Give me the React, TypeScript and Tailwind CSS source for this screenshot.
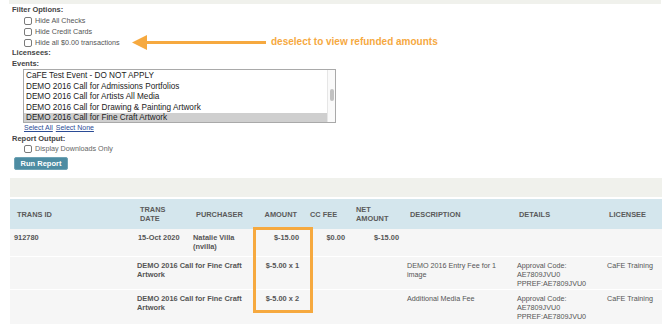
const events = [
  "CaFE Test Event - DO NOT APPLY",
  "DEMO 2016 Call for Admissions Portfolios",
  "DEMO 2016 Call for Artists All Media",
  "DEMO 2016 Call for Drawing & Painting Artwork",
  "DEMO 2016 Call for Fine Craft Artwork",
];

function Check({ label }: { label: string }) {
  return (
    <div className="flex h-[11px] items-center gap-[3px] pl-[12px] text-[7.2px] leading-[11px] text-[#555]">
      <span className="h-[8px] w-[8px] rounded-[2px] border border-[#7a7a7a] bg-white" />
      {label}
    </div>
  );
}

const th = "pl-[6px] text-left align-middle font-bold text-[#5a5a5a]";
const td = "px-[4px] pt-[4px] align-top";

export default function App() {
  return (
    <div className="relative h-[335px] w-[670px] overflow-hidden bg-white font-['Liberation_Sans',Arial,sans-serif] text-[#444]">
      <div className="mx-[9px] h-[4px] bg-[#f0f1ec]" />

      <div className="pl-[12px] pt-[1px]">
        <div className="h-[10px] text-[7.5px] font-bold leading-[10px]">Filter Options:</div>
        <Check label="Hide All Checks" />
        <Check label="Hide Credit Cards" />
        <Check label="Hide all $0.00 transactions" />
        <div className="h-[10px] text-[7.5px] font-bold leading-[10px]">Licensees:</div>
        <div className="h-[11px] text-[7.5px] font-bold leading-[11px]">Events:</div>

        <div className="ml-[11px] flex h-[54px] w-[313px] overflow-hidden border border-[#a9a9a9] bg-white">
          <div className="flex-1 overflow-hidden pt-[1px]">
            {events.map((e, i) => (
              <div
                key={e}
                className={
                  "h-[10.6px] whitespace-nowrap pl-[2px] text-[8.2px] leading-[10.6px] text-[#222] " +
                  (i === events.length - 1 ? "bg-[#cfcfcf]" : "")
                }
              >
                {e}
              </div>
            ))}
          </div>
          <div className="w-[8px] border-l border-[#e6e6e6] bg-[#fafafa] pt-[19px]">
            <div className="mx-auto h-[12px] w-[4px] rounded-full bg-[#c2c2c2]" />
          </div>
        </div>

        <div className="flex h-[10px] gap-[3px] pl-[12px] text-[7px] leading-[10px] text-[#2b4c96] underline">
          <span>Select All</span>
          <span>Select None</span>
        </div>
        <div className="mt-[1px] h-[10px] text-[7.5px] font-bold leading-[10px]">Report Output:</div>
        <div className="flex h-[10px] items-center gap-[3px] pl-[12px] text-[7.2px] leading-[10px] text-[#666]">
          <span className="h-[8px] w-[8px] rounded-[2px] border border-[#7a7a7a] bg-white" />
          Display Downloads Only
        </div>
        <button className="ml-[2px] mt-[3px] flex h-[13px] w-[54px] items-center justify-center rounded-[2px] border border-[#6fa3b5] bg-[#4d8ca2] text-[7.5px] font-bold text-white">
          Run Report
        </button>
      </div>

      <div className="mx-[10px] mt-[8px] h-[19px] w-[652px] bg-[#f0f1ec]" />

      <div className="relative ml-[10px] mt-[2px] w-[652px]">
        <table className="w-[652px] table-fixed border-collapse text-[7.4px] leading-[9px]">
          <colgroup>
            <col className="w-[124px]" />
            <col className="w-[56px]" />
            <col className="w-[66px]" />
            <col className="w-[47px]" />
            <col className="w-[46px]" />
            <col className="w-[54px]" />
            <col className="w-[110px]" />
            <col className="w-[90px]" />
            <col className="w-[59px]" />
          </colgroup>
          <thead>
            <tr className="h-[30px] bg-[#d4e6ed]">
              <th className={th + " pl-[7px]"}>TRANS ID</th>
              <th className={th}>
                TRANS
                <br />
                DATE
              </th>
              <th className={th + " pl-[5px]"}>PURCHASER</th>
              <th className="pr-[6px] text-right align-middle font-bold text-[#5a5a5a]">AMOUNT</th>
              <th className={th + " pl-[7px]"}>CC FEE</th>
              <th className={th + " pl-[7px]"}>
                NET
                <br />
                AMOUNT
              </th>
              <th className={th + " pl-[7px]"}>DESCRIPTION</th>
              <th className={th}>DETAILS</th>
              <th className={th}>LICENSEE</th>
            </tr>
          </thead>
          <tbody className="text-[#555]">
            <tr className="h-[27px] border-b border-white bg-[#f6f6f6] font-bold">
              <td className={td}>912780</td>
              <td className={td}>15-Oct 2020</td>
              <td className={td + " pl-[3px]"}>Natalie Villa (nvilla)</td>
              <td className={td + " text-right"}>$-15.00</td>
              <td className={td + " text-right"}>$0.00</td>
              <td className={td + " text-right"}>$-15.00</td>
              <td className={td} />
              <td className={td} />
              <td className={td} />
            </tr>
            <tr className="h-[33px] border-b border-white bg-[#f6f6f6]">
              <td className={td} />
              <td className={td + " pl-[3px] font-bold"} colSpan={2}>
                DEMO 2016 Call for Fine Craft Artwork
              </td>
              <td className={td + " text-right font-bold"}>$-5.00 x 1</td>
              <td className={td} />
              <td className={td} />
              <td className={td + " text-[7.2px]"}>DEMO 2016 Entry Fee for 1 image</td>
              <td className={td + " text-[7.2px]"}>
                Approval Code: AE7809JVU0
                <br />
                PPREF:AE7809JVU0
              </td>
              <td className={td + " text-[7.2px]"}>CaFE Training</td>
            </tr>
            <tr className="h-[35px] border-b border-white bg-[#f6f6f6]">
              <td className={td} />
              <td className={td + " pl-[3px] font-bold"} colSpan={2}>
                DEMO 2016 Call for Fine Craft Artwork
              </td>
              <td className={td + " text-right font-bold"}>$-5.00 x 2</td>
              <td className={td} />
              <td className={td} />
              <td className={td + " text-[7.2px]"}>Additional Media Fee</td>
              <td className={td + " text-[7.2px]"}>
                Approval Code: AE7809JVU0
                <br />
                PPREF:AE7809JVU0
              </td>
              <td className={td + " text-[7.2px]"}>CaFE Training</td>
            </tr>
          </tbody>
        </table>
        <div className="absolute left-[243px] top-[28px] h-[86px] w-[60px] border-[3px] border-[#f6a93f]" />
      </div>

      {/* annotation arrow */}
      <svg className="absolute left-[131px] top-[34px]" width="136" height="17" viewBox="0 0 136 17">
        <polygon points="1,8.5 16,1 16,16" fill="#f6a93f" />
        <rect x="15" y="7" width="120" height="3" fill="#f6a93f" />
      </svg>
      <div className="absolute left-[271px] top-[37px] text-[10px] font-bold leading-[10px] text-[#f6a93f]">
        deselect to view refunded amounts
      </div>
    </div>
  );
}
